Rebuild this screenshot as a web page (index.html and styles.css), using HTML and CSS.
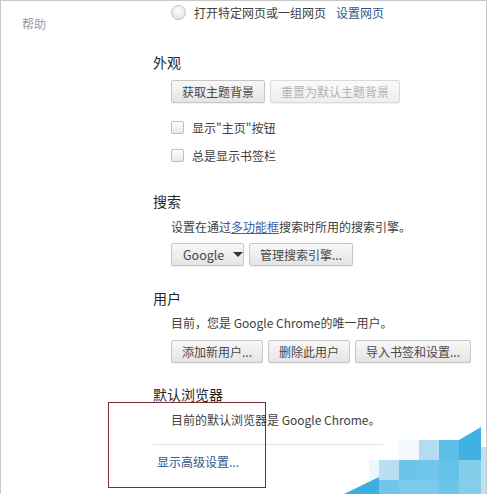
FILE: index.html
```html
<!DOCTYPE html>
<html lang="zh-CN">
<head>
    <meta charset="UTF-8">
    <meta name="viewport" content="width=device-width, initial-scale=1.0">
    <title>设置</title>
    <link rel="stylesheet" href="styles.css">
</head>
<body>

    <div class="window">
        <aside class="sidebar">帮助</aside>

        <main class="settings">
            <div class="radio-row">
                <span class="radio"></span>
                <span class="label">打开特定网页或一组网页</span>
                <a class="link" href="#">设置网页</a>
            </div>

            <section class="group group-look">
                <h3>外观</h3>
                <div class="btn-row">
                    <button class="btn">获取主题背景</button>
                    <button class="btn" disabled>重置为默认主题背景</button>
                </div>
                <label class="check first-check"><span class="box"></span>显示&quot;主页&quot;按钮</label>
                <label class="check"><span class="box"></span>总是显示书签栏</label>
            </section>

            <section class="group group-search">
                <h3>搜索</h3>
                <p class="desc">设置在通过<a class="link underline" href="#">多功能框</a>搜索时所用的搜索引擎。</p>
                <div class="btn-row">
                    <button class="btn select">Google <span class="arrow"></span></button>
                    <button class="btn">管理搜索引擎...</button>
                </div>
            </section>

            <section class="group group-users">
                <h3>用户</h3>
                <p class="desc">目前，您是 Google Chrome的唯一用户。</p>
                <div class="btn-row">
                    <button class="btn">添加新用户...</button>
                    <button class="btn">删除此用户</button>
                    <button class="btn">导入书签和设置...</button>
                </div>
            </section>

            <section class="group group-browser">
                <h3>默认浏览器</h3>
                <p class="desc">目前的默认浏览器是 Google Chrome。</p>
            </section>

            <hr class="divider">
            <a class="link advanced" href="#">显示高级设置...</a>
        </main>

        <!-- annotation box drawn over the page -->
        <div class="highlight"></div>

        <svg class="mosaic" viewBox="345 427 143 67" width="143" height="67">
            <rect x="400" y="440" width="20" height="20" fill="#f2f8fb"/>
            <rect x="420" y="440" width="20" height="20" fill="#b4dcf0"/>
            <rect x="440" y="440" width="20" height="20" fill="#5cbde6"/>
            <rect x="460" y="440" width="22" height="20" fill="#40b1e4"/>
            <polygon points="460,440 482,427 482,440" fill="#40b1e4"/>
            <rect x="482" y="447" width="6" height="47" fill="#c0e2f0"/>
            <rect x="370" y="460" width="10" height="20" fill="#eef7fb"/>
            <rect x="380" y="460" width="20" height="20" fill="#b9e0f2"/>
            <rect x="400" y="460" width="20" height="20" fill="#6cc4e9"/>
            <rect x="420" y="460" width="20" height="20" fill="#6ec5e9"/>
            <rect x="440" y="460" width="20" height="20" fill="#64c1e7"/>
            <rect x="460" y="460" width="22" height="20" fill="#84cdea"/>
            <rect x="380" y="480" width="20" height="14" fill="#6fc6ea"/>
            <rect x="400" y="480" width="40" height="14" fill="#7acaeb"/>
            <rect x="440" y="480" width="20" height="14" fill="#6dc4e9"/>
            <rect x="460" y="480" width="22" height="14" fill="#86cdea"/>
            <polygon points="345,494 380,477 380,494" fill="#3caee0"/>
        </svg>
    </div>

</body>
</html>
```

FILE: styles.css
```css
body {
    margin: 0;
    padding: 0;
    background: #ffffff;
    font-family: "Noto Sans CJK SC", "Noto Sans", sans-serif;
    font-size: 12px;
    color: #404040;
}
.window {
    position: relative;
    width: 487px;
    height: 494px;
    border-top: 1px solid #c8c8c8;
    border-left: 1px solid #c8c8c8;
    border-right: 1px solid #c8c8c8;
    box-sizing: border-box;
    display: flex;
    overflow: hidden;
}
.sidebar {
    width: 152px;
    flex: none;
    box-sizing: border-box;
    padding: 15px 0 0 21px;
    line-height: 16px;
    color: #9a9a9a;
}
.settings {
    flex: 1;
    display: flex;
    flex-direction: column;
    align-items: flex-start;
}
.radio-row {
    margin: 2px 0 0 18px;
    height: 18px;
    display: flex;
    align-items: center;
}
.radio {
    width: 13px;
    height: 13px;
    border: 1px solid #c2c2c2;
    border-radius: 50%;
    background: radial-gradient(circle at 50% 35%, #ffffff, #dcdcdc);
    margin-right: 8px;
}
.label {
    margin-right: 10px;
}
.link {
    color: #2b5a8c;
    text-decoration: none;
}
.link.underline {
    text-decoration: underline;
    color: #3a62a0;
}
.group {
    display: flex;
    flex-direction: column;
    align-items: flex-start;
}
.group h3 {
    margin: 0;
    font-size: 14px;
    font-weight: normal;
    line-height: 20px;
    color: #262626;
}
.group-look { margin-top: 31px; }
.group-search { margin-top: 26px; }
.group-users { margin-top: 22px; }
.group-browser { margin-top: 21px; }
.desc {
    margin: 7px 0 0 18px;
    line-height: 18px;
}
.group-users .desc { margin-top: 6px; }
.btn-row {
    margin: 7px 0 0 18px;
    display: flex;
    gap: 5px;
}
.group-look .btn-row,
.group-users .btn-row { margin-top: 8px; }
.btn {
    height: 23px;
    padding: 0 10px;
    border: 1px solid #c6c6c6;
    border-radius: 2px;
    background: linear-gradient(#f8f8f8, #e4e4e4);
    font-family: inherit;
    font-size: 12px;
    color: #484848;
    line-height: 21px;
    box-shadow: 0 1px 0 rgba(0, 0, 0, 0.05);
}
.btn[disabled] {
    color: #b4b4b4;
    background: linear-gradient(#fafafa, #eeeeee);
    border-color: #dadada;
}
.btn.select {
    width: 73px;
    padding: 0 0 0 11px;
    display: flex;
    align-items: center;
    font-size: 12.5px;
}
.arrow {
    margin-left: 9px;
    width: 0;
    height: 0;
    border-left: 5px solid transparent;
    border-right: 5px solid transparent;
    border-top: 5px solid #333;
}
.check {
    margin: 8px 0 0 18px;
    height: 20px;
    display: flex;
    align-items: center;
}
.check.first-check { margin-top: 14px; }
.box {
    width: 11px;
    height: 11px;
    border: 1px solid #bdbdbd;
    border-radius: 2px;
    background: linear-gradient(#ffffff, #e6e6e6);
    margin-right: 8px;
}
.divider {
    margin: 15px 0 0 0;
    width: 230px;
    border: none;
    border-top: 1px solid #e4e4e4;
}
.advanced {
    margin: 8px 0 0 4px;
    line-height: 18px;
}
.highlight {
    position: absolute;
    left: 107px;
    top: 401px;
    width: 156px;
    height: 84px;
    border: 1px solid #7a2c33;
}
.mosaic {
    position: absolute;
    right: -1px;
    bottom: 0;
}
```
